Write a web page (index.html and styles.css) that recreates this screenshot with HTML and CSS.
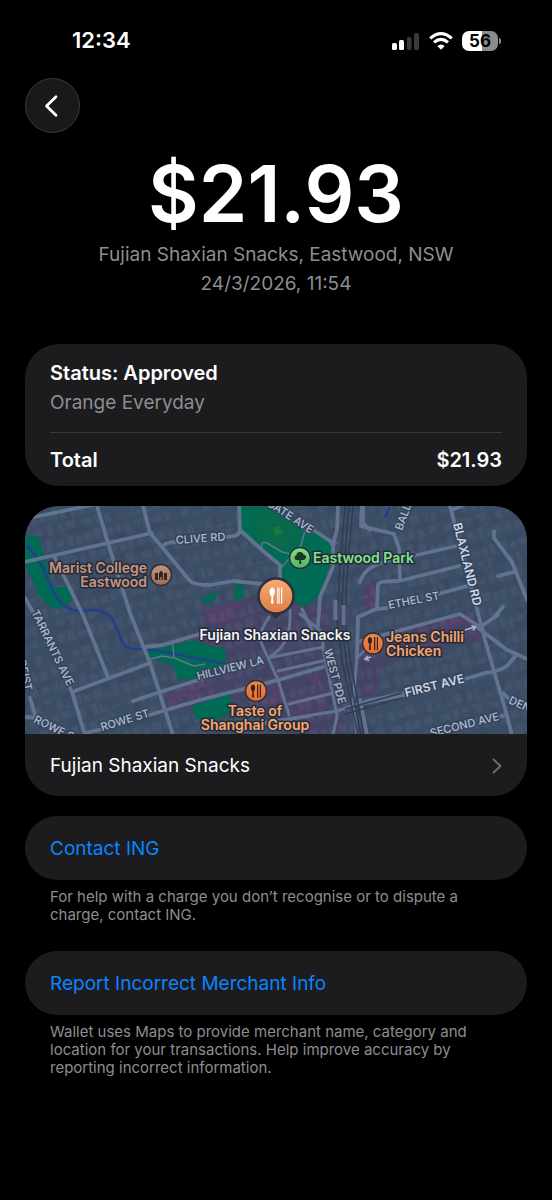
FILE: index.html
```html
<!DOCTYPE html>
<html lang="en-AU">
<head>
<meta charset="utf-8">
<meta name="viewport" content="width=device-width, initial-scale=1">
<title>Transaction</title>
<link rel="stylesheet" href="styles.css">
</head>
<body>
<div class="status-bar">
  <span class="clock">12:34</span>
  <div class="indicators">
    <svg class="signal" viewBox="0 0 28 18" aria-hidden="true">
      <rect x="0" y="11" width="5" height="7" rx="1.5" fill="#fff"/>
      <rect x="7" y="8" width="5" height="10" rx="1.5" fill="#fff"/>
      <rect x="15" y="5" width="4.500" height="13" rx="1.500" fill="#3a3a3a"/>
      <rect x="22" y="1" width="5" height="17" rx="1.5" fill="#3a3a3a"/>
    </svg>
    <svg class="wifi" viewBox="0 0 24 18" fill="none" stroke="#fff" stroke-width="3.2" aria-hidden="true">
      <path d="M1.2 6.400Q12-3 22.800 6.400M5 10.400Q12 4.400 19 10.400"/>
      <path d="M12 17.800L8.300 14Q12 10.800 15.700 14Z" fill="#fff" stroke="none"/>
    </svg>
    <div class="battery"><span class="level">56</span><i class="cap"></i></div>
  </div>
</div>
<header class="top">
  <button class="back" type="button" aria-label="Back">
    <svg viewBox="0 0 24 24" fill="none" stroke="#fff" stroke-width="2.800" stroke-linecap="round" stroke-linejoin="round"><path d="M15 2.800L5.500 12L15 21.200"/></svg>
  </button>
</header>
<main>
  <section class="summary">
    <h1>$21.93</h1>
    <p>Fujian Shaxian Snacks, Eastwood, NSW</p>
    <p>24/3/2026, 11:54</p>
  </section>

  <section class="card details">
    <h2>Status: Approved</h2>
    <p class="account">Orange Everyday</p>
    <div class="total"><span>Total</span><span>$21.93</span></div>
  </section>

  <section class="card place">
    <svg class="map" viewBox="25 506 502 228" preserveAspectRatio="xMidYMid slice" role="img" aria-label="Map of Eastwood">
      <defs>
        <pattern id="homes" width="50" height="46" patternUnits="userSpaceOnUse" patternTransform="rotate(-14)">
          <path fill="#61718a" d="M3 3h7v9h-7zM13 5h6v7h-6zM22 2h9v9h-9zM34 4h6v8h-6zM43 3h5v10h-5zM4 18h9v7h-9zM17 16h6v10h-6zM26 18h7v8h-7zM37 16h9v8h-9zM2 32h7v8h-7zM12 30h7v11h-7zM23 32h8v7h-8zM35 30h5v10h-5zM43 33h6v8h-6z"/>
        </pattern>
        <pattern id="yards" width="83" height="67" patternUnits="userSpaceOnUse" patternTransform="rotate(-20)">
          <path fill="#33435b" d="M5 4h14v7h-14zM28 2h6v16h-6zM44 8h17v6h-17zM68 3h8v12h-8zM2 26h8v14h-8zM20 24h19v8h-19zM50 27h7v17h-7zM66 30h13v7h-13zM9 48h15v8h-15zM34 44h7v14h-7zM48 52h20v7h-20z"/>
        </pattern>
        <linearGradient id="orange" x2="0" y2="1"><stop stop-color="#f6ab73"/><stop offset="1" stop-color="#df7d46"/></linearGradient>
        <linearGradient id="deep" x2="0" y2="1"><stop stop-color="#f08a43"/><stop offset="1" stop-color="#e76c26"/></linearGradient>
        <linearGradient id="green" x2="0" y2="1"><stop stop-color="#85dd83"/><stop offset="1" stop-color="#4fb45c"/></linearGradient>
        <linearGradient id="brown" x2="0" y2="1"><stop stop-color="#c5947c"/><stop offset="1" stop-color="#9e6c55"/></linearGradient>
        <g id="cutlery"><path d="M-3-6C-5.300-6-5.800-1.500-4.200.3L-3.700 1L-4 6.500Q-3 7.500-2 6.500L-2.300 1L-1.800.3C-.2-1.500-.7-6-3-6Z"/><path d="M1-6h1v13h-1zM4-6h1v13h-1zM2.700-6h.5v13h-.5z"/></g>
      </defs>
      <rect x="25" y="506" width="502" height="228" fill="#3c4d66"/>
      <g fill="#484366">
        <path d="M202 612L280 588L300 600L330 606L345 734H290L262 705L200 712L165 707L166 694L205 678L188 648Z" opacity=".85"/>
        <path d="M362 590L377 580L377 612L362 616ZM356 640L465 611L482 625L484 640L442 648L385 664L373 697H356Z"/>
        <path d="M330 655h16l22 79h-30z" opacity=".4"/>
      </g>
      <g fill="#5a4069" opacity=".6">
        <path d="M166 693L207 680L211 695L169 706ZM192 638l26-9 8 17-17 5zM204 609l40-7 2 15-38 8zM310 674l20-4 2 12-19 3zM289 700l34-8 3 15-34 8zM258 690l22-7 4 18-21 5zM356 644l18-6 7 14-22 7zM438 622l34-10 5 15-32 9zM366 583l10-3v29l-12 3z"/>
      </g>
      <rect x="25" y="506" width="502" height="228" fill="url(#homes)" opacity=".18"/>
      <rect x="25" y="506" width="502" height="228" fill="url(#yards)" opacity=".35"/>
      <g fill="#006b55">
        <path d="M25 536H38L45 558L53 587L68 587L75 597L63 608H52L40 597L25 565Z"/>
        <path d="M240 507H272L300 520L317 533L334 547L327 573L318 597L304 607L290 600L281 578L281 567L265 550L240 530Z"/>
        <path d="M146 650L173 645L193 640L225 649L227 666L212 671L194 678L178 680L173 665L148 658Z"/>
        <path d="M192 706L230 694L232 712L210 722L195 718ZM203 597l15-6-3 9-13 3zM235 585l8-2 1 15-10 2z"/>
      </g>
      <path d="M254 523Q262 506 286 512L298 527Q305 541 286 548Q258 550 254 523Z" fill="#08694b"/>
      <path d="M273 528l6-2 4 7-8 3z" fill="#187a43"/>
      <path d="M26 545C36 554 40 563 44 570C54 596 60 606 73 610S98 604 110 617S118 647 132 649C150 647 190 658 227 664M390 507L385 517" fill="none" stroke="#233f8c" stroke-width="2.500"/>
      <g fill="none" stroke="#62738f" stroke-linejoin="round" stroke-linecap="round">
        <g stroke-width="3.800">
          <path d="M25 519L92 505M97 506L108 543L130 613L150 663L173 735M25 562L108 543L152 533M143 506L150 533L162 547L190 581Q194 585 210 585L233 581L262 584M163 546Q166 542 178 542M225 537Q240 537 240 530M55 558L83 615L108 677M72 692L150 663M25 598L33 612M65 678L72 692L85 735M133 701L160 692L205 678M85 733L103 729M146 716L200 700L247 688L278 680L323 667M25 717L36 718L30 698M145 647L163 645L203 633"/>
          <path d="M239 506L240 530L263 551L280 565V584M303 523L333 543M338 506L337 530L333 543L333 567L320 597L318 626M362 506L361 526L394 534L399 548L400 580M363 506V523L370 530M413 556L456 546M360 582Q365 566 386 562L400 554M450 506L455 525L477 609L485 640L506 712L512 735M451 510L462 506M494 531V538L512 562L527 600M498 576L514 572M503 607L494 617"/>
          <path d="M357 657L358 617L376 609L389 608M438 594L467 586M377 609L378 584Q380 581 399 581L459 566M477 627L507 650L527 659M480 627L498 615M517 654L507 666Q498 672 485 673L465 679M360 704L405 695M360 700L367 735M497 717L507 715M503 693L512 702M361 641L460 614L480 627"/>
        </g>
        <path d="M269 617Q259 632 260 640L268 658Q282 650 286 639Q291 628 290 610M268 658L323 647M268 658L278 680L289 715M300 614L323 633L323 649L333 695L337 716L333 735M278 671L331 659M289 704L333 693M256 724L337 711L370 700L404 693M370 645L357 658L353 702L357 735M228 730L310 716M302 609L312 630" stroke-width="3"/>
        <path d="M173 645L174 658L194 666L205 664M147 660L162 656L174 658M262 549Q260 540 267 543L282 552L294 555M306 527L301 545L282 567" stroke-width="1.500"/>
        <circle cx="333" cy="543" r="3"/>
      </g>
      <g fill="none" stroke="#303c51" stroke-width="1.500">
        <path d="M349 506L344 567L341 620L347 665L361 735M353 506L347 575L345 620L351 665L364 735M345 506L340 567L337 620L342 660L358 735M345 709L402 693M345 714L402 698"/>
      </g>
      <path d="M335.500 600v20M343.500 605v20" stroke="#6a6b98" stroke-width="4"/>
      <path d="M465 630L475 627M471.500 625.500L475.500 627L473 630.500M365 659L371 657M368 656L365 659L369 660.500" fill="none" stroke="#a9b5ca" stroke-width="1.500"/>

      <g class="street">
        <text transform="translate(176 544) rotate(-4)">CLIVE RD</text>
        <text transform="translate(266 505) rotate(33)">GATE AVE</text>
        <text transform="translate(402 531) rotate(-70)">BALL</text>
        <text class="major" transform="translate(453 524) rotate(76)">BLAXLAND RD</text>
        <text transform="translate(389 609) rotate(-11)">ETHEL ST</text>
        <text transform="translate(31 612) rotate(64)">TARRANTS AVE</text>
        <text transform="translate(18 661) rotate(77)">REIST</text>
        <text transform="translate(33 722) rotate(26)">ROWE ST</text>
        <text transform="translate(102 731) rotate(-17)">ROWE ST</text>
        <text transform="translate(198 680) rotate(-14)">HILLVIEW LA</text>
        <text transform="translate(324 650) rotate(75)">WEST PDE</text>
        <text class="major" transform="translate(406 697) rotate(-14)">FIRST AVE</text>
        <text transform="translate(431 737) rotate(-14)">SECOND AVE</text>
        <text transform="translate(508 703) rotate(24)">DEN</text>
      </g>
      <g class="poi">
        <g class="school" text-anchor="end"><text x="147" y="573">Marist College</text><text x="147" y="587">Eastwood</text></g>
        <text class="park" x="313" y="563">Eastwood Park</text>
        <text class="merchant" x="275" y="640" text-anchor="middle">Fujian Shaxian Snacks</text>
        <g class="food"><text x="386" y="642">Jeans Chilli</text><text x="386" y="656">Chicken</text></g>
        <g class="food" text-anchor="middle"><text x="255" y="716">Taste of</text><text x="255" y="730">Shanghai Group</text></g>
      </g>
      <g stroke="#2b303c" stroke-width="1.500">
        <circle cx="161" cy="575" r="10.500" fill="url(#brown)"/>
        <circle cx="300" cy="558" r="10.500" fill="url(#green)"/>
        <circle cx="373" cy="643.500" r="10.500" fill="url(#deep)"/>
        <circle cx="256" cy="691" r="10.500" fill="url(#deep)"/>
        <path d="M270 611L276 618L282 611Z" fill="#343846"/>
        <circle cx="276" cy="596" r="17.500" fill="url(#orange)" stroke-width="2.500"/>
      </g>
      <use href="#cutlery" transform="translate(276 595) scale(1.250)" fill="#fff"/>
      <use href="#cutlery" x="373" y="643" fill="#302528"/>
      <use href="#cutlery" x="256" y="690.500" fill="#302528"/>
      <path d="M299 564l.5-4q-5 1-5-2.500 0-2 2-2.500 0-3 3.500-3 3 0 3.500 2.500 3 .5 2.500 3-.5 3-5 2.500l.5 4z" fill="#173a27"/>
      <path d="M155 580v-7h3v7zM159 580v-7l2-2.500 2 2.500v7h-1.300v-3h-1.400v3zM164 580v-7h3v7z" fill="#33262a"/>
    </svg>
    <button class="place-link" type="button">
      <span>Fujian Shaxian Snacks</span>
      <svg viewBox="0 0 10 16" fill="none" stroke="#6b6b70" stroke-width="2" stroke-linecap="round" stroke-linejoin="round" aria-hidden="true"><path d="M1.500 1.500L8.500 8L1.500 14.500"/></svg>
    </button>
  </section>

  <section class="action">
    <button class="pill" type="button">Contact ING</button>
    <p>For help with a charge you don’t recognise or to dispute a charge, contact ING.</p>
  </section>
  <section class="action">
    <button class="pill" type="button">Report Incorrect Merchant Info</button>
    <p>Wallet uses Maps to provide merchant name, category and location for your transactions. Help improve accuracy by reporting incorrect information.</p>
  </section>
</main>
</body>
</html>
```
FILE: styles.css
```css
* { box-sizing: border-box; }
body {
  margin: 0;
  min-height: 100vh;
  background: #000;
  color: #fff;
  font-family: Inter, "Liberation Sans", sans-serif;
  font-size: 19px;
  line-height: 29px;
}
h1, h2, p { margin: 0; }
button { font: inherit; border: 0; cursor: pointer; }

.status-bar {
  display: flex;
  justify-content: space-between;
  align-items: center;
  padding: 26px 54px 0 72px;
}
.clock { font-size: 22px; font-weight: 600; }
.indicators { display: flex; align-items: center; gap: 9px; }
.signal { width: 28px; height: 18px; }
.wifi { width: 24px; height: 18px; }
.battery {
  position: relative;
  width: 36px;
  height: 20px;
  border-radius: 7px;
  background: linear-gradient(90deg, #fff 56%, #8b8b8b 56%);
  color: #000;
  font-size: 17px;
  font-weight: 700;
  line-height: 20px;
  text-align: center;
}
.level { display: block; }
.cap {
  position: absolute;
  right: -3px;
  top: 7px;
  width: 2px;
  height: 6px;
  border-radius: 0 2px 2px 0;
  background: #8b8b8b;
}

.top { padding: 23px 25px 0; }
.back {
  display: grid;
  place-items: center;
  width: 55px;
  height: 55px;
  padding: 0;
  border: 1px solid #3a3a3a;
  border-radius: 50%;
  background: #191919;
}
.back svg { width: 24px; height: 24px; }

main {
  display: flex;
  flex-direction: column;
  gap: 20px;
  padding: 18px 25px 40px;
}
.summary { padding-bottom: 26px; text-align: center; color: #8d8d92; }
.summary h1 {
  padding-bottom: 3px;
  color: #fff;
  font-size: 78px;
  font-weight: 600;
  line-height: 86px;
}

.card { overflow: hidden; border-radius: 34px; background: #1c1c1e; }
.details { padding: 15px 25px 11px; }
.details h2 { font-size: 20px; font-weight: 600; line-height: 29px; }
.account { color: #8d8d92; }
.total {
  display: flex;
  justify-content: space-between;
  margin-top: 15px;
  padding-top: 13px;
  border-top: 1px solid #38383a;
  font-size: 20px;
  font-weight: 600;
}

.map { display: block; width: 100%; height: auto; }
.map text { paint-order: stroke; stroke-linejoin: round; }
.street { fill: #aebbd0; stroke: #35445b; stroke-width: 3px; font-size: 11px; font-weight: 500; }
.major { fill: #cdd6e4; font-size: 12px; font-weight: 600; }
.poi { font-size: 14px; font-weight: 600; stroke: #252b39; stroke-width: 3px; }
.school { fill: #c69580; }
.park { fill: #82e389; }
.merchant { fill: #f3f4f8; }
.food { fill: #f8a66c; }
.place-link {
  display: flex;
  justify-content: space-between;
  align-items: center;
  width: 100%;
  padding: 17px 25px 16px;
  background: none;
  color: #fff;
  text-align: left;
}
.place-link svg { width: 10px; height: 16px; }

.pill {
  display: block;
  width: 100%;
  padding: 18px 25px 17px;
  border-radius: 32px;
  background: #1c1c1e;
  color: #0a84ff;
  text-align: left;
}
.action p {
  padding: 8px 25px 7px;
  color: #8d8d92;
  font-size: 15px;
  line-height: 18px;
}
```
